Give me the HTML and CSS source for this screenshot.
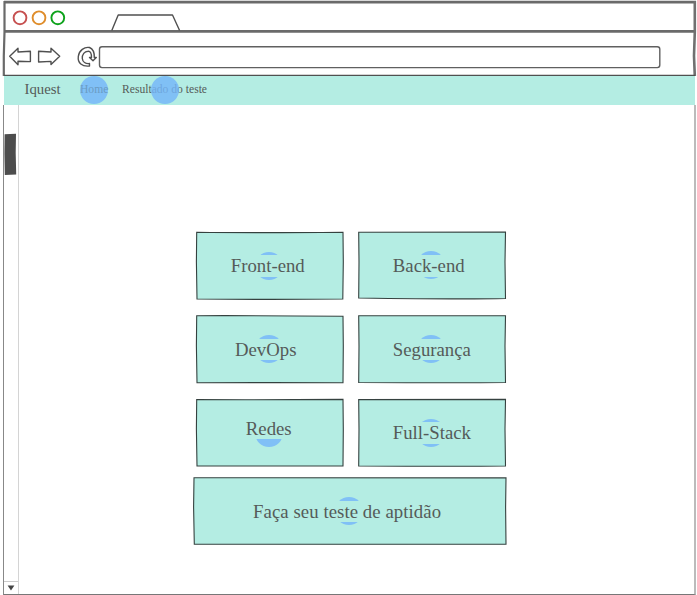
FILE: index.html
```html
<!DOCTYPE html>
<html lang="pt-BR">
<head>
<meta charset="utf-8">
<title>Iquest</title>
<link rel="stylesheet" href="styles.css">
</head>
<body>
<div class="window">
  <svg class="chrome" viewBox="0 0 697 76" fill="none" stroke="#505050" stroke-width="1.4" stroke-linejoin="round">
    <path d="M4 2.2H696" stroke="#6a6a6a" stroke-width="2.8"/>
    <path d="M4 31.4H695" stroke="#6a6a6a" stroke-width="2.8"/>
    <path d="M4.5 1V32L3.8 56V76" stroke="#6a6a6a" stroke-width="2.2"/>
    <path d="M694.8 1V32L694 56L694.8 76" stroke="#707070" stroke-width="2.6"/>
    <path d="M4 75.4H695" stroke-width="1.4"/>
    <g stroke-width="1.9">
      <circle cx="20" cy="17.8" r="6.4" stroke="#c65050"/>
      <circle cx="39" cy="17.8" r="6.4" stroke="#df8d2b"/>
      <circle cx="57.8" cy="17.8" r="6.4" stroke="#0da21b"/>
    </g>
    <path d="M111.8 30.5L118.2 15H172.5L179.6 30.5"/>
    <path d="M9.7 56.3L18 48.2V52L30.4 51.2V61.6L18 61.2V64.7Z"/>
    <path d="M59.7 56.3L51 48.2V52L38.6 51.2V62L51 61.4V64.5Z"/>
    <path d="M89.5 66C82 66.8 77.5 63 78.3 56.5C79 50.5 84.500 46.500 89.500 47.500C93 49 94.500 52 94.300 57.500H96.300L93 60.700L89.500 57.500H91.500C91.500 53.500 90.500 51 88 51.200C84.500 51.300 82 54.500 82.300 58.500C82.600 62 85.500 64 89.500 63.500Z"/>
    <rect x="99.500" y="46.800" width="560.300" height="20.800" rx="2.500" stroke="#606060"/>
  </svg>

  <nav class="nav">
    <a class="brand">Iquest</a>
    <a class="link home"><span class="dot"></span><span class="text">Home</span></a>
    <a class="link result">Resultado do teste<span class="dot"></span></a>
  </nav>

  <div class="view">
    <div class="scrollbar">
      <svg class="thumb" viewBox="0 0 13 44"><path d="M.6 1.200L12 .8L11.700 20L12.200 41.500L.8 42L.4 21Z" fill="#4d4d4d"/></svg>
      <div class="down"><svg viewBox="0 0 8 6"><path d="M.6 .6H7.400L4 5.500Z" fill="#444"/></svg></div>
    </div>
    <main class="board">
      <div class="grid">
        <div class="card front"><svg viewBox="0 0 148 68"><path d="M.7 .2Q60 1 147 .2L147.300 30L146.800 67Q75 67.800 1 67L.4 30Z"/></svg><span class="dot"></span><span class="label">Front-end</span></div>
        <div class="card back"><svg viewBox="0 0 148 68"><path d="M.7 .2Q60 .2 147.500 0L147 30L147.500 66.500Q105 67.500 .7 66L1 30Z"/></svg><span class="dot"></span><span class="label">Back-end</span></div>
        <div class="card devops"><svg viewBox="0 0 148 68"><path d="M.7 -.3Q60 -.5 147 .2L147.300 30L147 66.800Q75 66.400 1 66.800L.4 30Z"/></svg><span class="dot"></span><span class="label">DevOps</span></div>
        <div class="card seg"><svg viewBox="0 0 148 68"><path d="M.7 -.3Q60 0 147.500 -.2L147 30L147.500 66.500Q105 67 .7 66.500L1 30Z"/></svg><span class="dot"></span><span class="label">Segurança</span></div>
        <div class="card redes"><svg viewBox="0 0 148 68"><path d="M.7 .6Q60 .9 147 .4L147.300 30L147 67Q75 66.800 1 67L.4 30Z"/></svg><span class="dot"></span><span class="label">Redes</span></div>
        <div class="card full"><svg viewBox="0 0 148 68"><path d="M.7 .6Q60 .8 147.500 .4L147 30L147.500 67Q105 67.400 .7 67L1 30Z"/></svg><span class="dot"></span><span class="label">Full-Stack</span></div>
      </div>
      <div class="card wide"><svg viewBox="0 0 314 68"><path d="M1 .7Q150 1.200 313 .9L312.600 30L313 67.300Q170 67.500 1.300 67.300L.6 30Z"/></svg><span class="dot"></span><span class="label">Faça seu teste de aptidão</span></div>
    </main>
  </div>
</div>
</body>
</html>
```

FILE: styles.css
```css
* { box-sizing: border-box; }

body {
  margin: 0;
  background: #fff;
  color: #555b59;
  font-family: "Liberation Serif", "Times New Roman", serif;
}

.window {
  width: 697px;
  height: 595px;
  overflow: hidden;
  display: flex;
  flex-direction: column;
}

.chrome {
  display: block;
  flex: none;
  width: 697px;
  height: 76px;
}

.nav {
  display: flex;
  align-items: center;
  flex: none;
  height: 29px;
  margin: 0 2px 0 4px;
  padding: 0 0 3px 20.5px;
  background: #b4ede3;
}

.brand {
  width: 55.5px;
  font-size: 14.8px;
}

.link {
  position: relative;
  font-size: 11.6px;
  white-space: nowrap;
}

.home { width: 42px; color: #6a9cc4; }

.text { position: relative; }

.dot {
  position: absolute;
  width: 28px;
  height: 28px;
  border-radius: 50%;
  background: #80c0f6;
}

.nav .dot {
  top: -7px;
  left: 0;
}

.nav .result .dot {
  left: 28.5px;
  opacity: .82;
  background: #74b6f9;
}

.view {
  display: flex;
  flex: 1;
  min-height: 0;
  margin: 0 1px 0 3px;
  border-left: 1px solid #888;
  border-right: 2px solid #bbb;
  border-bottom: 1px solid #777;
}

.scrollbar {
  display: flex;
  flex-direction: column;
  width: 15px;
  border-right: 1px solid #d4d4d4;
}

.thumb {
  width: 13px;
  height: 44px;
  margin-top: 28px;
}

.down {
  display: flex;
  align-items: center;
  justify-content: center;
  height: 13px;
  margin-top: auto;
  border-top: 1px solid #ccc;
}

.down svg { width: 8px; height: 6px; margin-right: 1px; }

.board {
  padding: 127px 0 0 173.5px;
}

.grid {
  display: grid;
  grid-template-columns: 148px 148px;
  grid-template-rows: 68px 68px 68px;
  gap: 15.5px 14px;
  margin-left: 3px;
}

.card {
  position: relative;
  height: 68px;
  padding: 23.3px 0 0 35.3px;
}

.card > svg {
  position: absolute;
  inset: 0;
  width: 100%;
  height: 100%;
  overflow: visible;
  fill: #b4ede3;
  stroke: #35413f;
  stroke-width: 1.1;
}

.card .dot {
  top: 20px;
  left: 59.5px;
}

.label {
  position: relative;
  display: inline-block;
  height: 21.5px;
  line-height: 21.5px;
  font-size: 18.75px;
  white-space: nowrap;
  background: #b4ede3;
}

.back .dot { top: 19px; }
.devops { padding-left: 39.5px; }
.devops .dot, .seg .dot { top: 19px; }
.redes { padding: 18.5px 0 0 50.3px; }
.wide { width: 314px; margin-top: 10px; padding: 23.8px 0 0 60.5px; }
.wide .label { letter-spacing: .07px; }
.wide .dot { left: 142.5px; }
```
